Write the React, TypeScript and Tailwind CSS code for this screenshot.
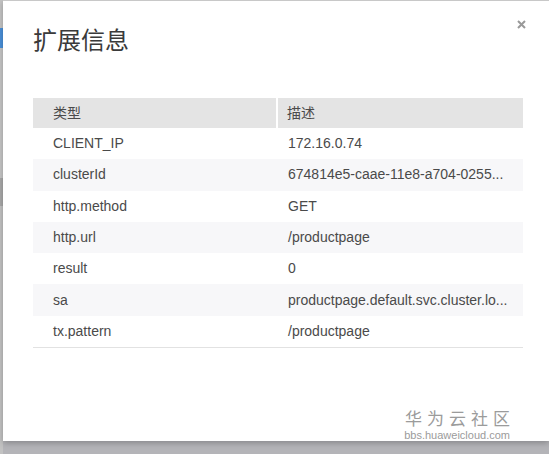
import React from 'react';

const rows = [
  { k: 'CLIENT_IP', v: '172.16.0.74' },
  { k: 'clusterId', v: '674814e5-caae-11e8-a704-0255...' },
  { k: 'http.method', v: 'GET' },
  { k: 'http.url', v: '/productpage' },
  { k: 'result', v: '0' },
  { k: 'sa', v: 'productpage.default.svc.cluster.lo...' },
  { k: 'tx.pattern', v: '/productpage' },
];

export default function App() {
  return (
    <div
      className="w-[549px] h-[454px] bg-[#bdbdc0] flex overflow-hidden"
      style={{ fontFamily: '"Liberation Sans", Arial, "Noto Sans CJK SC", sans-serif' }}
    >
      {/* page behind the mask */}
      <div className="w-[3px] h-full flex flex-col">
        <div className="h-[28px] bg-[#c4c4c4]" />
        <div className="h-[20px] bg-[#4a90d9]" />
        <div className="h-[130px] bg-[#c6c6c6]" />
        <div className="h-[28px] bg-[#a9a9a9]" />
        <div className="flex-1 bg-[#c2c2c2]" />
      </div>

      <div className="flex-1 flex flex-col">
        <div className="h-[441px] bg-white border-t border-[#c8c8c8] relative shadow-[0_2px_6px_rgba(0,0,0,0.25)] overflow-hidden">
          <button className="absolute right-[23px] top-[19px] text-[#999]">
            <svg width="9" height="9" viewBox="0 0 9 9">
              <path d="M1 1L8 8M8 1L1 8" stroke="currentColor" strokeWidth="2" />
            </svg>
          </button>

          <h2 className="text-[24px] leading-none text-[#3a3a3a] pl-[30px] pt-[28px]">扩展信息</h2>

          <div className="mt-[45px] ml-[30px] w-[490px] text-[14px] text-[#4a4a4a]">
            <div className="flex h-[30px] bg-[#e4e4e4] items-center">
              <div className="w-[245px] pl-[20px] border-r-2 border-white h-full flex items-center">类型</div>
              <div className="flex-1 pl-[9px]">描述</div>
            </div>
            {rows.map((r, i) => (
              <div
                key={r.k}
                className={`flex h-[31.3px] items-center ${i % 2 === 1 ? 'bg-[#f7f7f9]' : 'bg-white'}`}
              >
                <div className="w-[245px] pl-[20px]">{r.k}</div>
                <div className="w-[245px] pl-[10px] whitespace-nowrap">{r.v}</div>
              </div>
            ))}
            <div className="border-t border-[#e2e2e2]" />
          </div>

          <div className="absolute right-[39px] bottom-[-1px] flex flex-col items-end text-[#9b9b9b]">
            <div className="text-[17px] leading-none tracking-[5px] mr-[-5px]">华为云社区</div>
            <div className="text-[11px] leading-[14px]">bbs.huaweicloud.com</div>
          </div>
        </div>
        <div className="flex-1 bg-[#b4b4b8]" />
      </div>
    </div>
  );
}
